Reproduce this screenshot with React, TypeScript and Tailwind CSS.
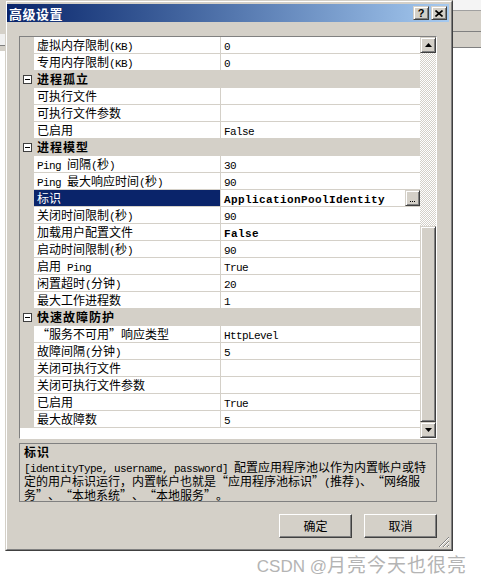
import React from "react";

const MONO = "font-['Liberation_Mono',monospace] text-[11px] tracking-[-0.6px]";
const MONO_B = "font-['Liberation_Mono',monospace] text-[11px] tracking-[0.4px] font-bold";
const CJK = "font-['Noto_Sans_CJK_SC',sans-serif] text-[12px]";
const CJK_B = "font-['Noto_Sans_CJK_SC',sans-serif] text-[12px] font-bold tracking-[1px]";

function T({ s, bold }: { s: string; bold?: boolean }) {
  const parts = s.match(/[\x00-\x7f]+|[“]|[”]|[^\x00-\x7f“”]+/g) || [];
  return (
    <>
      {parts.map((p, i) => {
        if (p === "“")
          return (
            <span key={i} className={`${CJK} inline-block w-[12px] text-right`}>
              {p}
            </span>
          );
        if (p === "”")
          return (
            <span key={i} className={`${CJK} inline-block w-[12px] text-left`}>
              {p}
            </span>
          );
        return /^[\x00-\x7f]+$/.test(p) ? (
          <span key={i} className={bold ? MONO_B : MONO}>
            {p}
          </span>
        ) : (
          <span key={i} className={bold ? CJK_B : CJK}>
            {p}
          </span>
        );
      })}
    </>
  );
}

const BEVEL =
  "border border-t-[#d4d0c8] border-l-[#d4d0c8] border-r-[#404040] border-b-[#404040] shadow-[inset_1px_1px_0_#ffffff,inset_-1px_-1px_0_#808080] bg-[#d4d0c8]";

type RowT =
  | { cat: string }
  | { name: string; value: string; bold?: boolean; selected?: boolean };

const rows: RowT[] = [
  { name: "虚拟内存限制(KB)", value: "0" },
  { name: "专用内存限制(KB)", value: "0" },
  { cat: "进程孤立" },
  { name: "可执行文件", value: "" },
  { name: "可执行文件参数", value: "" },
  { name: "已启用", value: "False" },
  { cat: "进程模型" },
  { name: "Ping 间隔(秒)", value: "30" },
  { name: "Ping 最大响应时间(秒)", value: "90" },
  { name: "标识", value: "ApplicationPoolIdentity", bold: true, selected: true },
  { name: "关闭时间限制(秒)", value: "90" },
  { name: "加载用户配置文件", value: "False", bold: true },
  { name: "启动时间限制(秒)", value: "90" },
  { name: "启用 Ping", value: "True" },
  { name: "闲置超时(分钟)", value: "20" },
  { name: "最大工作进程数", value: "1" },
  { cat: "快速故障防护" },
  { name: "“服务不可用”响应类型", value: "HttpLevel" },
  { name: "故障间隔(分钟)", value: "5" },
  { name: "关闭可执行文件", value: "" },
  { name: "关闭可执行文件参数", value: "" },
  { name: "已启用", value: "True" },
  { name: "最大故障数", value: "5" },
];

function Row({ r }: { r: RowT }) {
  if ("cat" in r) {
    return (
      <div className="flex h-[17px] bg-[#d4d0c8]">
        <div className="w-[14px] flex items-center justify-center">
          <div className="w-[9px] h-[9px] border border-[#404040] bg-white flex items-center justify-center">
            <div className="w-[5px] h-[1px] bg-black" />
          </div>
        </div>
        <div className="pl-[3px] text-[12px] leading-[16px] whitespace-pre text-black">
          <T s={r.cat} bold />
        </div>
      </div>
    );
  }
  return (
    <div className="flex h-[17px]">
      <div className="w-[14px] bg-[#d4d0c8]" />
      <div
        className={
          r.selected
            ? "w-[187px] border-b border-r border-[#d4d0c8] pl-[3px] text-[12px] leading-[16px] whitespace-pre bg-[#0a246a] text-white"
            : "w-[187px] border-b border-r border-[#d4d0c8] pl-[3px] text-[12px] leading-[16px] whitespace-pre bg-white text-black"
        }
      >
        <T s={r.name} />
      </div>
      <div className="flex-1 flex border-b border-[#d4d0c8] bg-white text-black">
        <div className="flex-1 pl-[3px] text-[12px] leading-[16px] whitespace-pre">
          <T s={r.value} bold={r.bold} />
        </div>
        {r.selected && (
          <div className={`${BEVEL} w-[15px] h-[16px] flex items-end justify-center pb-[3px]`}>
            <div className="flex gap-[1px]">
              <div className="w-[1px] h-[1px] bg-black" />
              <div className="w-[1px] h-[1px] bg-black" />
              <div className="w-[1px] h-[1px] bg-black" />
            </div>
          </div>
        )}
      </div>
    </div>
  );
}

function Tri({ down }: { down?: boolean }) {
  return (
    <svg width="7" height="4" viewBox="0 0 7 4">
      {down ? <polygon points="0,0 7,0 3.5,4" fill="black" /> : <polygon points="3.5,0 7,4 0,4" fill="black" />}
    </svg>
  );
}

export default function App() {
  return (
    <div className="w-[481px] h-[582px] bg-white overflow-hidden flex flex-col font-['Noto_Sans_CJK_SC',sans-serif]">
      <div className="flex h-[551px]">
        {/* left background strip */}
        <div className="w-[5px] flex flex-col">
          <div className="h-[34px] bg-[#d4d0c8]" />
          <div className="h-[12px] bg-[#f0f0f0] border-b border-[#808080]" />
          <div className="h-[5px] bg-[#d4d0c8]" />
          <div className="flex-1 bg-white" />
        </div>

        {/* dialog */}
        <div className="w-[448px] h-[551px] border border-t-[#d4d0c8] border-l-[#d4d0c8] border-r-[#404040] border-b-[#404040] bg-[#d4d0c8]">
          <div className="relative h-full border border-t-white border-l-white border-r-[#808080] border-b-[#808080] pt-[2px] flex flex-col">
            {/* title bar */}
            <div className="h-[18px] mr-[2px] bg-gradient-to-r from-[#0a246a] to-[#a6caf0] flex items-center pl-[2px] pr-[2px]">
              <div className="flex-1 text-white text-[13px] font-bold leading-none tracking-[0.5px]">高级设置</div>
              <div className="flex gap-[2px]">
                <div className={`${BEVEL} w-[16px] h-[14px] flex items-center justify-center text-[11px] font-bold leading-none font-['Liberation_Sans',sans-serif] text-black`}>
                  ?
                </div>
                <div className={`${BEVEL} w-[16px] h-[14px] flex items-center justify-center`}>
                  <svg width="8" height="7" viewBox="0 0 8 7">
                    <path d="M0.5 0.5 L7.5 6.5 M7.5 0.5 L0.5 6.5" stroke="black" strokeWidth="1.6" />
                  </svg>
                </div>
              </div>
            </div>

            {/* property grid */}
            <div className="mt-[14px] ml-[12px] w-[418px] h-[403px] border border-t-[#808080] border-l-[#808080] border-r-white border-b-white flex">
              <div className="w-[400px] bg-white flex flex-col">
                {rows.map((r, i) => (
                  <Row key={i} r={r} />
                ))}
              </div>
              <div className="w-[16px] flex flex-col">
                <div className={`${BEVEL} h-[16px] flex items-center justify-center`}>
                  <Tri />
                </div>
                <div className="h-[173px] bg-[conic-gradient(#ffffff_90deg,#d4d0c8_90deg_180deg,#ffffff_180deg_270deg,#d4d0c8_270deg)] bg-[length:2px_2px]" />
                <div className={`${BEVEL} flex-1`} />
                <div className={`${BEVEL} h-[16px] flex items-center justify-center`}>
                  <Tri down />
                </div>
              </div>
            </div>

            {/* description */}
            <div className="mt-[4px] ml-[12px] w-[418px] h-[59px] border border-[#808080] pl-[4px] pt-[2px] text-black text-[12px]">
              <div className="leading-[12px] whitespace-pre">
                <T s="标识" bold />
              </div>
              <div className="mt-[3px] leading-[12px] whitespace-pre">
                <div>
                  <T s="[identityType, username, password] 配置应用程序池以作为内置帐户或特" />
                </div>
                <div>
                  <T s="定的用户标识运行，内置帐户也就是“应用程序池标识”(推荐)、“网络服" />
                </div>
                <div>
                  <T s="务”、“本地系统”、“本地服务”。" />
                </div>
              </div>
            </div>

            {/* buttons */}
            <div className="mt-[12px] ml-[12px] w-[418px] flex justify-end gap-[12px]">
              <div className="w-[73px] h-[24px] border border-t-white border-l-white border-r-[#404040] border-b-[#404040] shadow-[inset_-1px_-1px_0_#808080] flex items-center justify-center text-[12px] text-black leading-none">
                确定
              </div>
              <div className="w-[73px] h-[24px] border border-t-white border-l-white border-r-[#404040] border-b-[#404040] shadow-[inset_-1px_-1px_0_#808080] flex items-center justify-center text-[12px] text-black leading-none">
                取消
              </div>
            </div>

            {/* resize grip */}
            <div className="absolute right-[1px] bottom-[1px]">
              <svg width="12" height="12" viewBox="0 0 12 12">
                <path d="M11 1 L1 11 M11 5 L5 11 M11 9 L9 11" stroke="#808080" strokeWidth="1" />
                <path d="M11 2 L2 11 M11 6 L6 11 M11 10 L10 11" stroke="#ffffff" strokeWidth="1" />
              </svg>
            </div>
          </div>
        </div>

        {/* right background strip */}
        <div className="flex-1 flex flex-col">
          <div className="h-[11px] bg-[#f4f4f4] border-b border-[#a0a0a0]" />
          <div className="h-[21px] bg-[#d4d0c8] border-b border-[#808080]" />
          <div className="h-[16px] bg-[#d4d0c8] border-b border-[#808080]" />
          <div className="flex-1 bg-white" />
        </div>
      </div>

      {/* watermark */}
      <div className="flex justify-end pr-[14px] pt-[3px] text-[#b4b4b4] leading-none items-baseline">
        <span className="font-['Liberation_Sans',sans-serif] text-[17px]">CSDN @</span>
        <span className="font-['Noto_Sans_CJK_SC',sans-serif] text-[19px] tracking-[1px]">月亮今天也很亮</span>
      </div>
    </div>
  );
}
